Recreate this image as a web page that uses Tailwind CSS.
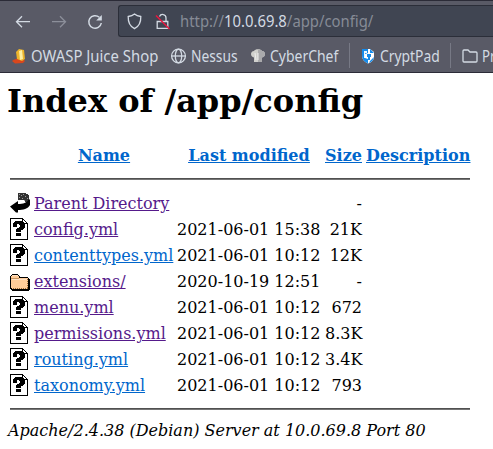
<!DOCTYPE html>
<html lang="en">
<head>
<meta charset="utf-8">
<title>Index of /app/config</title>
<script src="https://cdn.jsdelivr.net/npm/@tailwindcss/browser@4"></script>
</head>
<body class="w-[493px] h-[449px] overflow-hidden bg-white text-black">
<svg class="hidden">
  <symbol id="unknown" viewBox="0 0 20 22"><g shape-rendering="crispEdges"><path d="M0 0h13v1h1v1h1v1h1v1h1v1h1v17H0z" fill="#000"/><path d="M1 1h11v5h5v15H1z" fill="#fff"/><path d="M13 2h1v1h1v1h1v1h-3z" fill="#fff"/><path d="M5 3h8v1h1v1h1v5h-1v1h-1v1h-2v2H6v-3h1v-1h2V9h1V7H9V6H7v3H3V5h1V4h1zM6 15h5v3H6z" fill="#000"/></g></symbol>
</svg>
<header class="h-[73px] overflow-hidden bg-[#595a66] border-t border-b border-t-[#2b2b37] border-b-[#2b2b37] font-['Noto_Sans',sans-serif] text-[#d3dae3] whitespace-nowrap">
  <div class="h-[37px] pt-1 pl-[15px] flex">
    <nav class="w-[103px] pt-[9px] flex gap-5 shrink-0">
      <svg width="16" height="16" viewBox="0 0 16 16" fill="none" stroke="#d3dae3" stroke-width="1.3"><path d="M15 7.700H1.500M7 2.200 1.500 7.700 7 13.200"/></svg>
      <svg width="16" height="16" viewBox="0 0 16 16" fill="none" stroke="#8c8f9a" stroke-width="1.3"><path d="M1 7.700h13.500M9 2.200l5.500 5.500L9 13.200"/></svg>
      <svg width="16" height="16" viewBox="0 0 16 16" fill="none" stroke="#d3dae3" stroke-width="1.5"><path d="M12.300 3.300A6.300 6.300 0 1 0 14.300 9"/><path d="M14.800 1v5.600H9.200z" fill="#d3dae3" stroke="none"/></svg>
    </nav>
    <div class="flex-1 h-8 bg-[#404552] border border-r-0 border-[#2b2e39] rounded-l-[3px] flex pl-2">
      <svg class="mt-[7px]" width="16" height="17" viewBox="0 0 16 17" fill="none" stroke="#d3dae3" stroke-width="1.3"><path d="M7.500 1C5.500 2.700 3.300 3.200 1.200 3.500c-.2 5.500 1.600 9.800 6.300 12.200 4.700-2.400 6.500-6.700 6.300-12.200C11.700 3.200 9.500 2.700 7.500 1z"/></svg>
      <svg class="ml-[11px] mt-[6px]" width="17" height="18" viewBox="0 0 17 18" fill="none" stroke="#d3dae3" stroke-width="1.3"><path d="M3.200 9.500h10.600v6.800H3.200zM5.500 4.500a3.400 3.400 0 0 1 6.500 1.200v3.800"/><path d="M2 3.500 15.500 17" stroke="#e8173f" stroke-width="1.5"/></svg>
      <div class="ml-[9px] leading-[31px] text-[15.5px] text-[#868b96] origin-left scale-x-[0.957]">http://<span class="text-[#d3dae3]">10.0.69.8</span>/app/config/</div>
    </div>
  </div>
  <div class="h-[34px] pl-3 flex items-center text-[15.5px]">
    <a class="w-[158px] flex items-center shrink-0">
      <svg class="mr-[3px] mt-0.5 shrink-0" width="16" height="16" viewBox="0 0 16 16"><path d="M0 13c2-2 5-2 6-3l6 2 1 1-2 2-8 .5z" fill="#d8471d"/><path d="m4 4 3-3 5 1 1 9-3 2-5-2z" fill="#edb52b"/><path d="m7 3 3-1 1 9-3 1z" fill="#fff0a2"/></svg>
      <span class="leading-5 mt-0.5 origin-left scale-x-[0.96]">OWASP Juice Shop</span>
    </a>
    <a class="w-20 flex items-center shrink-0">
      <svg class="mr-1 mt-0.5 shrink-0" width="17" height="16" viewBox="0 0 17 16" fill="none" stroke="#d3dae3" stroke-width="1.3"><circle cx="8.500" cy="8" r="6.900"/><path d="M1.600 8h13.800"/><ellipse cx="8.500" cy="8" rx="3.200" ry="6.900"/></svg>
      <span class="leading-5 mt-0.5 origin-left scale-x-[0.89]">Nessus</span>
    </a>
    <a class="w-[99px] flex items-center shrink-0">
      <svg class="mr-1 mt-0.5 shrink-0" width="16" height="16" viewBox="0 0 16 16"><path d="M4 14V9.500C0 9 0 3 4 3c1-2.500 7-2.500 8 0 4 0 4 6 0 6.500V14z" fill="#d0d0cd"/><path d="M8 2v12h4V9.500c4-.5 4-6.500 0-6.500-.8-1.300-2-1.600-4-1z" fill="#aaaaac"/><path d="m5 5 1 7M8 5v7" stroke="#eee"/></svg>
      <span class="leading-5 mt-0.5 origin-left scale-x-[0.9]">CyberChef</span>
    </a>
    <span class="h-[25px] w-px bg-[#777985] shrink-0"></span>
    <a class="w-[100px] pl-[11px] flex items-center shrink-0">
      <svg class="mr-1 mt-0.5 shrink-0" width="15" height="16" viewBox="0 0 15 16"><path d="M1 1h8l4 3v6c-1 3-3 4.500-6 5.500C3 14 1 11 1 8z" fill="#fff"/><path d="M1 1h6v4L4 6v4l3 1v4.500C3 14 1 11 1 8z" fill="#168bea"/><path d="M9 1v4h4zM6 6h4v3H9v3H7V9H6zM9 13l4-4c-.5 3-2 5-5 6z" fill="#168bea"/><path d="M3 3h3v2H4v5H3z" fill="#eaf7ff"/></svg>
      <span class="leading-5 mt-0.5 origin-left scale-x-[0.895]">CryptPad</span>
    </a>
    <span class="h-[25px] w-px bg-[#777985] shrink-0"></span>
    <a class="w-[43px] pl-[11px] flex items-center shrink-0">
      <svg class="mr-1 mt-0.5 shrink-0" width="16" height="16" viewBox="0 0 16 16" fill="none" stroke="#d3dae3" stroke-width="1.3"><path d="M1 3c0-.8.5-1 1-1h4l2 2h6c.7 0 1 .5 1 1v8c0 .7-.5 1-1 1H2c-.7 0-1-.5-1-1z"/></svg>
      <span class="leading-5 mt-0.5 origin-left scale-x-[0.85]">Pr</span>
    </a>
  </div>
</header>
<main class="font-['DejaVu_Serif',serif] text-[16px] px-2 pt-[9px] whitespace-nowrap">
  <h1 class="-ml-px text-[32px] font-bold leading-[38px]">Index of /app/config</h1>
  <div class="ml-[2px] mt-[23px] w-[460px]">
    <div class="grid grid-cols-[24px_139px_144px_37px_104px] h-[26px] leading-[26px] text-center font-bold text-[#0066cc] underline">
      <span></span><a class="pl-px">Name</a><a class="pl-[8px]">Last modified</a><a class="pl-[8px]">Size</a><a class="pl-[12px]">Description</a>
    </div>
    <div class="h-[2px] mt-[9px] bg-[#767676] border-t border-[#505050]"></div>
    <div class="mt-[11px] grid grid-cols-[20px_139px_144px_37px] gap-x-1 auto-rows-[26px] leading-[26px]">
      <svg class="mt-px" width="20" height="22" viewBox="0 0 20 22"><g shape-rendering="crispEdges"><path d="M8 1h7l1 1h2l1 2v6h-4V8H8z" fill="#333"/><path d="M9 2h1v1H9zm2 1h1v1h-1zm2-1h1v1h-1zM9 5h1v1H9zm3 1h1v1h-1zm3-2h1v1h-1zm-1 4h1v1h-1zm3-2h1v1h-1z" fill="#999"/></g><path d="M0 14.500 8 9v3c5 0 9-1 11-5l1 1v5c-2 4-7 5-12 5v2.500H6z"/></svg>
      <a class="underline text-[#551a8b]">Parent Directory</a><span></span><span class="text-right">-</span>
      <svg class="mt-px" width="20" height="22"><use href="#unknown"/></svg><a class="underline text-[#551a8b]">config.yml</a><span>2021-06-01 15:38</span><span class="text-right">21K</span>
      <svg class="mt-px" width="20" height="22"><use href="#unknown"/></svg><a class="underline text-[#0066cc]">contenttypes.yml</a><span>2021-06-01 10:12</span><span class="text-right">12K</span>
      <svg class="mt-px" width="20" height="22" viewBox="0 0 20 22"><g shape-rendering="crispEdges"><path d="M2 4h6v1h1v1h1v1h8v1h1v1h1v11h-1v1H2v-1H1v-1H0V6h1V5h1z"/><path d="M2 5h6v1h1v2h9v11H2v-1H1V6h1z" fill="#ffcc99"/><path d="M2 5h6v1H2zM2 9h15v1H2z" fill="#ffe2c4"/><path d="M1 8h8v1H1z" fill="#c9955f"/></g><path d="M3 18.500h15M17.500 9v9" stroke="#996633" stroke-dasharray="1 1"/></svg>
      <a class="underline text-[#551a8b]">extensions/</a><span>2020-10-19 12:51</span><span class="text-right">-</span>
      <svg class="mt-px" width="20" height="22"><use href="#unknown"/></svg><a class="underline text-[#551a8b]">menu.yml</a><span>2021-06-01 10:12</span><span class="text-right">672</span>
      <svg class="mt-px" width="20" height="22"><use href="#unknown"/></svg><a class="underline text-[#551a8b]">permissions.yml</a><span>2021-06-01 10:12</span><span class="text-right">8.3K</span>
      <svg class="mt-px" width="20" height="22"><use href="#unknown"/></svg><a class="underline text-[#0066cc]">routing.yml</a><span>2021-06-01 10:12</span><span class="text-right">3.4K</span>
      <svg class="mt-px" width="20" height="22"><use href="#unknown"/></svg><a class="underline text-[#0066cc]">taxonomy.yml</a><span>2021-06-01 10:12</span><span class="text-right">793</span>
    </div>
    <div class="h-[2px] mt-[9px] bg-[#767676] border-t border-[#505050]"></div>
  </div>
  <address class="mt-[11px] italic leading-[20px]">Apache/2.4.38 (Debian) Server at 10.0.69.8 Port 80</address>
</main>
</body>
</html>
